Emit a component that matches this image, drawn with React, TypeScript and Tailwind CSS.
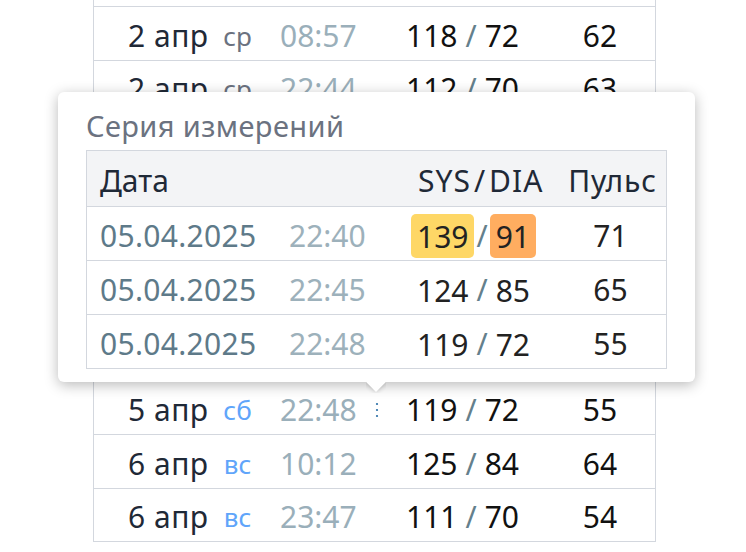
import React from "react";

type Row = { date: string; day: string; weekend?: boolean; time: string; sys: number; dia: number; pulse: number; series?: boolean };

const rows: Row[] = [
  { date: "1 апр", day: "вт", time: "21:15", sys: 121, dia: 75, pulse: 66 },
  { date: "2 апр", day: "ср", time: "08:57", sys: 118, dia: 72, pulse: 62 },
  { date: "2 апр", day: "ср", time: "22:44", sys: 112, dia: 70, pulse: 63 },
  { date: "3 апр", day: "чт", time: "08:12", sys: 120, dia: 78, pulse: 60 },
  { date: "3 апр", day: "чт", time: "22:31", sys: 116, dia: 74, pulse: 61 },
  { date: "4 апр", day: "пт", time: "09:05", sys: 122, dia: 76, pulse: 64 },
  { date: "4 апр", day: "пт", time: "23:10", sys: 117, dia: 73, pulse: 58 },
  { date: "5 апр", day: "сб", weekend: true, time: "09:40", sys: 121, dia: 77, pulse: 60 },
  { date: "5 апр", day: "сб", weekend: true, time: "22:48", sys: 119, dia: 72, pulse: 55, series: true },
  { date: "6 апр", day: "вс", weekend: true, time: "10:12", sys: 125, dia: 84, pulse: 64 },
  { date: "6 апр", day: "вс", weekend: true, time: "23:47", sys: 111, dia: 70, pulse: 54 },
];

const series = [
  { date: "05.04.2025", time: "22:40", sys: 139, dia: 91, pulse: 71, sysLevel: "bg-[#fed766]", diaLevel: "bg-[#ffad60]" },
  { date: "05.04.2025", time: "22:45", sys: 124, dia: 85, pulse: 65, sysLevel: "", diaLevel: "" },
  { date: "05.04.2025", time: "22:48", sys: 119, dia: 72, pulse: 55, sysLevel: "", diaLevel: "" },
];

const Dots = () => (
  <svg width="4" height="16" viewBox="0 0 4 16">
    <circle cx="2" cy="2" r="1.1" fill="#2a6ea6" />
    <circle cx="2" cy="8" r="1.1" fill="#2a6ea6" />
    <circle cx="2" cy="14" r="1.1" fill="#2a6ea6" />
  </svg>
);

const App = () => {
  return (
    <div className="relative w-[746px] h-[552px] overflow-hidden bg-white font-['Noto_Sans','DejaVu_Sans',sans-serif] text-[30px]">
      <div className="ml-[93px] mt-[-46.5px] w-[563px] border-x border-[#d3d7de]">
        {rows.map((r, i) => (
          <div key={i} className="flex items-center h-[53.5px] pt-[5px] border-b border-[#d3d7de] leading-none">
            <div className="w-[123px] pl-[34px] text-[#1f2937] whitespace-nowrap tracking-[0.5px]">{r.date}</div>
            <div className={`w-[41px] text-center text-[26px] ${r.weekend ? "text-[#60a5fa]" : "text-[#6b7280]"}`}>{r.day}</div>
            <div className="w-[109px] pl-[22px] text-[#9aafba]">{r.time}</div>
            <div className="w-[19px] flex justify-center">{r.series && <Dots />}</div>
            <div className="w-[174px] pl-[14px] text-[#111111] whitespace-nowrap">
              <span className="px-[6px]">{r.sys}</span>
              <span className="mx-[2px] text-[#64808c]">/</span>
              <span className="px-[6px]">{r.dia}</span>
            </div>
            <div className="w-[80px] text-center text-[#111111]">{r.pulse}</div>
          </div>
        ))}
      </div>

      <div className="absolute left-[58px] top-[92px] w-[637px]">
        <div className="relative z-10 rounded-[6px] bg-white px-[28px] pt-[16px] pb-[13px] shadow-[0_3px_14px_rgba(0,0,0,0.28)]">
          <div className="h-[36px] leading-[36px] mb-[6px] text-[29px] tracking-[0.4px] text-[#6b7280]">Серия измерений</div>
          <div className="border border-[#d3d7de]">
            <div className="flex items-center h-[56px] pt-[4px] bg-[#f3f4f6] border-b border-[#d3d7de] text-[#1f2937] leading-none">
              <div className="w-[310px] pl-[13px]">Дата</div>
              <div className="w-[158px] pl-[21px] whitespace-nowrap tracking-[1px]">
                SYS<span className="px-[3px]">/</span>DIA
              </div>
              <div className="flex-1 pl-[4px] text-center tracking-[0.8px]">Пульс</div>
            </div>
            {series.map((s, i) => (
              <div
                key={i}
                className={`flex items-center ${i < series.length - 1 ? "h-[54px] border-b border-[#d3d7de]" : "h-[53px]"} pt-[4px] leading-none`}
              >
                <div className="w-[188px] pl-[13px] text-[#5e7a89] tracking-[0.3px]">{s.date}</div>
                <div className="w-[122px] pl-[14px] text-[#9db1bb]">{s.time}</div>
                <div className="w-[158px] pl-[14px] flex items-center whitespace-nowrap text-[#222222]">
                  <span className={`inline-block h-[44px] leading-[42px] pt-[2px] px-[6px] rounded-[5px] ${s.sysLevel}`}>{s.sys}</span>
                  <span className="mx-[2px] text-[#64808c]">/</span>
                  <span className={`inline-block h-[44px] leading-[42px] pt-[2px] px-[6px] rounded-[5px] ${s.diaLevel}`}>{s.dia}</span>
                </div>
                <div className="flex-1 text-center text-[#222222]">{s.pulse}</div>
              </div>
            ))}
          </div>
        </div>
        <div className="absolute left-[308px] top-full h-[11px] w-[20px] overflow-hidden z-20">
          <div className="ml-[3px] mt-[-7px] h-[14px] w-[14px] rotate-45 bg-white shadow-[0_0_5px_rgba(0,0,0,0.25)]" />
        </div>
      </div>
    </div>
  );
};

export default App;
